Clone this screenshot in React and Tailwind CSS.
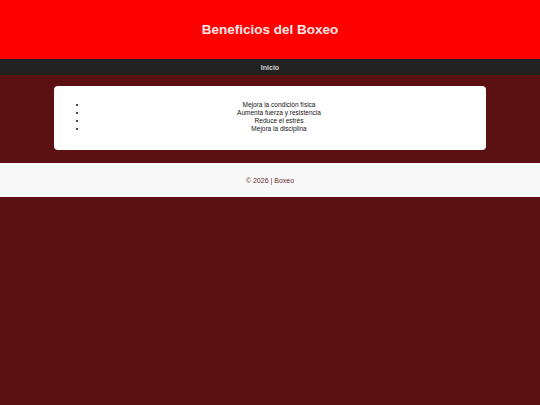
import React from "react";

const items = [
  "Mejora la condición física",
  "Aumenta fuerza y resistencia",
  "Reduce el estrés",
  "Mejora la disciplina",
];

export default function App() {
  return (
    <div className="min-h-[405px] bg-[#5b1111] font-['Liberation_Sans',Arial,sans-serif]">
      {/* Header */}
      <header className="h-[59px] bg-[#ff0000] flex items-center justify-center">
        <h1 className="text-[13.5px] font-bold text-[#fde8e8] leading-none">Beneficios del Boxeo</h1>
      </header>

      {/* Nav */}
      <nav className="h-[16px] bg-[#222222] flex items-center justify-center">
        <a className="text-[7px] font-bold text-[#d0d0d0] leading-none">Inicio</a>
      </nav>

      {/* Content */}
      <main className="px-[54px] pt-[11px] pb-[13px]">
        <section className="bg-white rounded-[4px] pt-[15px] pb-[17px] px-[10px]">
          <ul className="list-disc pl-[23px] pr-[5px] text-center text-[6.5px] leading-[8px] text-[#111]">
            {items.map((t) => (
              <li key={t}>{t}</li>
            ))}
          </ul>
        </section>
      </main>

      {/* Footer */}
      <footer className="h-[34px] bg-[#f9f9f9] flex items-center justify-center">
        <p className="text-[7px] text-[#6b2a2a] leading-none">© 2026 | Boxeo</p>
      </footer>
    </div>
  );
}
